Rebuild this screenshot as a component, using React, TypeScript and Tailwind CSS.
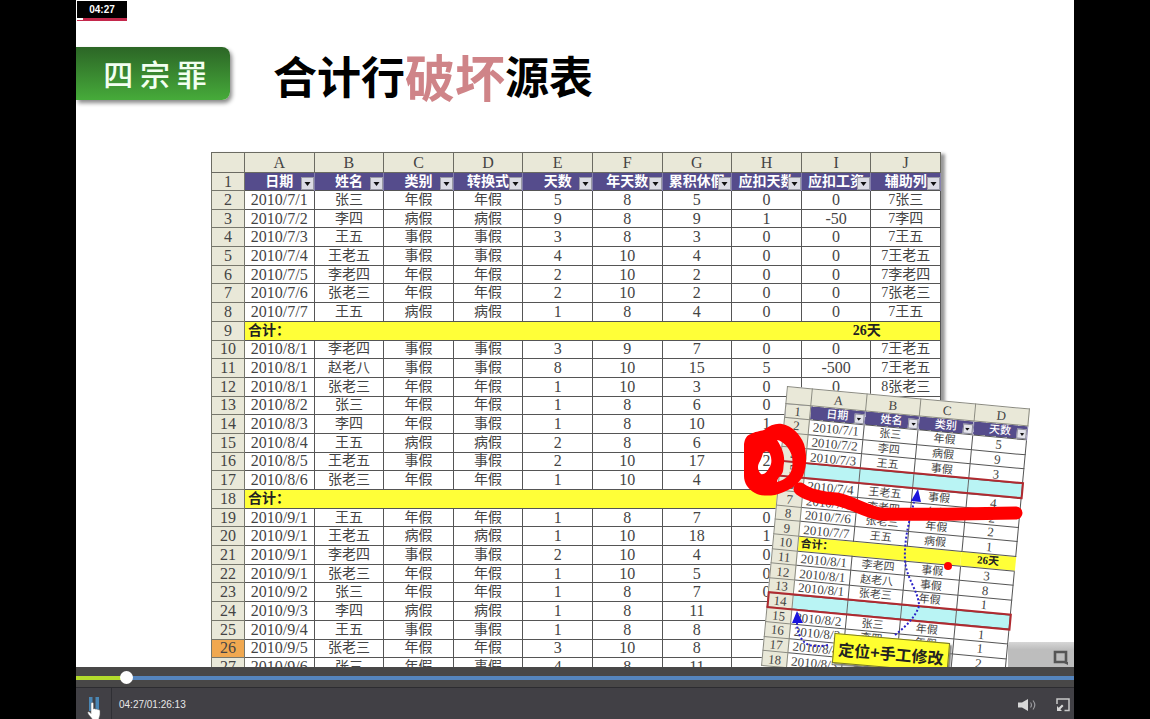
import React from "react";

type Row = string[];

const columns = ["A", "B", "C", "D", "E", "F", "G", "H", "I", "J"];

const headings = ["日期", "姓名", "类别", "转换式", "天数", "年天数", "累积休假", "应扣天数", "应扣工资", "辅助列"];

const records: Row[] = [
  ["2010/7/1", "张三", "年假", "年假", "5", "8", "5", "0", "0", "7张三"],
  ["2010/7/2", "李四", "病假", "病假", "9", "8", "9", "1", "-50", "7李四"],
  ["2010/7/3", "王五", "事假", "事假", "3", "8", "3", "0", "0", "7王五"],
  ["2010/7/4", "王老五", "事假", "事假", "4", "10", "4", "0", "0", "7王老五"],
  ["2010/7/5", "李老四", "年假", "年假", "2", "10", "2", "0", "0", "7李老四"],
  ["2010/7/6", "张老三", "年假", "年假", "2", "10", "2", "0", "0", "7张老三"],
  ["2010/7/7", "王五", "病假", "病假", "1", "8", "4", "0", "0", "7王五"],
  ["合计：", "26天"],
  ["2010/8/1", "李老四", "事假", "事假", "3", "9", "7", "0", "0", "7王老五"],
  ["2010/8/1", "赵老八", "事假", "事假", "8", "10", "15", "5", "-500", "7王老五"],
  ["2010/8/1", "张老三", "年假", "年假", "1", "10", "3", "0", "0", "8张老三"],
  ["2010/8/2", "张三", "年假", "年假", "1", "8", "6", "0", "", ""],
  ["2010/8/3", "李四", "年假", "事假", "1", "8", "10", "1", "", ""],
  ["2010/8/4", "王五", "病假", "病假", "2", "8", "6", "", "", ""],
  ["2010/8/5", "王老五", "事假", "事假", "2", "10", "17", "2", "", ""],
  ["2010/8/6", "张老三", "年假", "年假", "1", "10", "4", "", "", ""],
  ["合计：", ""],
  ["2010/9/1", "王五", "年假", "年假", "1", "8", "7", "0", "", ""],
  ["2010/9/1", "王老五", "病假", "病假", "1", "10", "18", "1", "", ""],
  ["2010/9/1", "李老四", "事假", "事假", "2", "10", "4", "0", "", ""],
  ["2010/9/1", "张老三", "年假", "年假", "1", "10", "5", "0", "", ""],
  ["2010/9/2", "张三", "年假", "年假", "1", "8", "7", "0", "", ""],
  ["2010/9/3", "李四", "病假", "病假", "1", "8", "11", "", "", ""],
  ["2010/9/4", "王五", "事假", "事假", "1", "8", "8", "", "", ""],
  ["2010/9/5", "张老三", "年假", "年假", "3", "10", "8", "", "", ""],
  ["2010/9/6", "张三", "年假", "事假", "4", "8", "11", "", "", ""],
];

const insetHeadings = ["日期", "姓名", "类别", "天数"];

const insetRecords: Row[] = [
  ["2010/7/1", "张三", "年假", "5"],
  ["2010/7/2", "李四", "病假", "9"],
  ["2010/7/3", "王五", "事假", "3"],
  [],
  ["2010/7/4", "王老五", "事假", "4"],
  ["2010/7/5", "李老四", "年假", "2"],
  ["2010/7/6", "张老三", "年假", "2"],
  ["2010/7/7", "王五", "病假", "1"],
  ["合计：", "26天"],
  ["2010/8/1", "李老四", "事假", "3"],
  ["2010/8/1", "赵老八", "事假", "8"],
  ["2010/8/1", "张老三", "年假", "1"],
  [],
  ["2010/8/2", "张三", "年假", "1"],
  ["2010/8/3", "李四", "年假", "1"],
  ["2010/8/4", "王五", "病假", "2"],
  ["2010/8/5", "王老五", "事假", "2"],
];

const isNumeric = (text: string) => /^[\d/-]+$/.test(text);

function FilterButton({ label, small }: { label: string; small?: boolean }) {
  return (
    <button
      type="button"
      aria-label={`筛选 ${label}`}
      className={
        small
          ? "absolute right-0 bottom-0 flex h-[10px] w-[10px] items-center justify-center border border-[#8b8b98] bg-[#e4e4ec]"
          : "absolute right-0 bottom-0 flex h-[13px] w-[13px] items-center justify-center border border-[#9a9aa6] bg-[#dcdce4]"
      }
    >
      <svg viewBox="0 0 6 4" className={small ? "h-[3px] w-[5px]" : "h-[4px] w-[7px]"} aria-hidden="true">
        <path d="M0 0h6L3 4z" fill="#111" />
      </svg>
    </button>
  );
}

function MainSheet() {
  return (
    <table className="h-[525px] w-full table-fixed border-collapse bg-white text-center font-['Liberation_Serif','Noto_Sans_CJK_SC',serif] text-[14px] leading-[14px] text-[#444] shadow-[4px_2px_3px_#999]">
      <colgroup>
        <col className="w-[33px]" />
        {columns.map((c) => (
          <col key={c} />
        ))}
      </colgroup>
      <thead>
        <tr className="h-[20px] bg-[#e9e8d8] text-[16px]">
          <th className="border border-[#6b6b62] p-0" />
          {columns.map((c) => (
            <th key={c} scope="col" className="border border-[#6b6b62] p-0 font-normal">
              {c}
            </th>
          ))}
        </tr>
        <tr className="h-[18px] bg-[#554c8c] text-white">
          <th className="border border-[#77776c] bg-[#e9e8d8] p-0 text-[16px] font-normal text-[#444]">1</th>
          {headings.map((h) => (
            <th key={h} scope="col" className="relative overflow-hidden border-x border-[#8580ac] p-0 font-bold whitespace-nowrap">
              <span className="flex justify-center">{h}</span>
              <FilterButton label={h} />
            </th>
          ))}
        </tr>
      </thead>
      <tbody>
        {records.map((row, i) => (
          <tr key={i} className="h-[18px]">
            <th
              scope="row"
              className={
                i + 2 === 26
                  ? "border border-[#77776c] bg-[#f0a850] p-0 text-[16px] font-normal"
                  : "border border-[#77776c] bg-[#e9e8d8] p-0 text-[16px] font-normal"
              }
            >
              {i + 2}
            </th>
            {row.length === 2 ? (
              <>
                <td colSpan={8} className="border-y border-[#555] bg-[#ffff38] p-0 pl-[3px] text-left font-bold text-[#222]">
                  {row[0]}
                </td>
                <td colSpan={2} className="border-y border-r border-[#555] bg-[#ffff38] p-0 pr-[8px] font-bold text-[#222]">
                  {row[1]}
                </td>
              </>
            ) : (
              row.map((cell, j) => (
                <td
                  key={j}
                  className={isNumeric(cell) ? "border border-[#555] p-0 text-[16px]" : "border border-[#555] p-0 whitespace-nowrap"}
                >
                  {cell}
                </td>
              ))
            )}
          </tr>
        ))}
      </tbody>
    </table>
  );
}

function InsetSheet() {
  return (
    <table className="h-[281px] w-[244px] table-fixed border-collapse bg-white text-center font-['Liberation_Serif','Noto_Sans_CJK_SC',serif] text-[11px] leading-[11px] text-[#444]">
      <colgroup>
        <col className="w-[25px]" />
        {insetHeadings.map((h) => (
          <col key={h} />
        ))}
      </colgroup>
      <thead>
        <tr className="h-[17px] bg-[#e9e8d8] text-[13px]">
          <th className="border border-[#8b8b80] p-0" />
          {columns.slice(0, 4).map((c) => (
            <th key={c} scope="col" className="border border-[#8b8b80] p-0 font-normal">
              {c}
            </th>
          ))}
        </tr>
        <tr className="h-[14px] bg-[#554c8c] text-white">
          <th className="border border-[#8b8b80] bg-[#e9e8d8] p-0 text-[13px] font-normal text-[#444]">1</th>
          {insetHeadings.map((h) => (
            <th key={h} scope="col" className="relative border-x border-[#8580ac] p-0 font-medium">
              {h}
              <FilterButton label={h} small />
            </th>
          ))}
        </tr>
      </thead>
      <tbody>
        {insetRecords.map((row, i) => (
          <tr key={i} className={row.length === 0 ? "h-[14px] outline-2 -outline-offset-1 outline-[#b02a30]" : "h-[14px]"}>
            <th scope="row" className="border border-[#8b8b80] bg-[#e9e8d8] p-0 text-[13px] font-normal">
              {i + 2}
            </th>
            {row.length === 0 &&
              insetHeadings.map((h) => <td key={h} className="border border-[#666] bg-[#b9f4f4] p-0" />)}
            {row.length === 2 && (
              <>
                <td colSpan={3} className="border-y border-[#555] bg-[#ffff38] p-0 pl-[2px] text-left font-bold text-[#222]">
                  {row[0]}
                </td>
                <td className="border-y border-[#555] bg-[#ffff38] p-0 font-bold text-[#222]">{row[1]}</td>
              </>
            )}
            {row.length === 4 &&
              row.map((cell, j) => (
                <td key={j} className={isNumeric(cell) ? "border border-[#555] p-0 text-[13px]" : "border border-[#555] p-0"}>
                  {cell}
                </td>
              ))}
          </tr>
        ))}
      </tbody>
    </table>
  );
}

function Annotations() {
  return (
    <svg viewBox="740 380 300 290" className="absolute top-[228px] left-[529px] h-[290px] w-[300px]" fill="none" aria-hidden="true">
      <g stroke="#2a22c8" strokeWidth="2" strokeDasharray="2 2">
        <path d="M895 635C905 627 915 618 919 606C919 592 906 578 905 560C904 540 909 522 914 502" />
        <path d="M828 645C812 648 804 645 800 636C798 632 797 628 797 622" />
      </g>
      <path d="M918 489l-7 12 10 1z" fill="#1a14dd" />
      <path d="M797 611l-5 12 11 0z" fill="#1a14dd" />
      <path
        fill="#ff0000"
        fillRule="evenodd"
        d="M751 434C754 432 760 431 764 430C770 425 776 423 782 424C792 426 800 434 804 444C807 454 807 466 803 476C797 487 786 492 775 495C768 496 760 496 755 493C748 489 744 483 744 476L744 444C745 438 747 435 751 434ZM763 453C766 451 769 451 770 454C772 459 772 464 769 468C767 472 764 475 761 474C758 471 757 467 759 463C761 460 762 456 763 453ZM777 440C783 441 789 447 792 456C793 464 793 471 788 476C785 479 781 481 777 482C777 479 779 477 781 475C784 472 783 468 784 463C785 455 782 448 777 440Z"
      />
      <path stroke="#ff0000" strokeWidth="13" strokeLinecap="round" strokeLinejoin="round" d="M800 489C808 495 820 498 836 499C852 502 864 511 880 514C920 515 970 514 1016 513" />
      <circle cx="948" cy="566" r="4" fill="#ff0000" />
    </svg>
  );
}

function Slide() {
  return (
    <main className="relative min-h-0 flex-1 overflow-hidden bg-white">
      <div className="absolute top-[1px] left-[1px] h-[20px] w-[50px] border-b-[3px] border-[#c4284c] bg-black text-center font-['Liberation_Sans',sans-serif] text-[10px] leading-[17px] font-bold text-white">
        04:27
        <span className="absolute -bottom-[2px] left-0 h-[2px] w-[6px] bg-white" />
      </div>
      <header className="flex items-center pt-[47px]">
        <div className="flex h-[53px] w-[154px] items-center justify-center rounded-r-lg bg-linear-to-b from-[#2c6626] to-[#46ab3a] pl-1 font-['Noto_Sans_CJK_SC',sans-serif] text-[30px] font-medium text-[#f2fff0] shadow-[2px_3px_4px_#888]">
          四 宗 罪
        </div>
        <h1 className="flex items-center pt-1 pl-[43px] text-[44px] leading-[49px] font-bold text-black">
          <span>合计行</span>
          <span className="text-[50px] text-[#cf8488]">破坏</span>
          <span>源表</span>
        </h1>
      </header>
      <div className="relative mt-[52px] ml-[135px] w-[730px]">
        <MainSheet />
        <div className="absolute top-[234px] left-[576px] origin-top-left rotate-[5.3deg]">
          <InsetSheet />
        </div>
        <Annotations />
        <div className="absolute top-[486px] left-[622px] flex h-[30px] w-[116px] rotate-[5deg] items-center justify-center border border-[#77772a] bg-[#ffff30] text-[16px] leading-[20px] font-bold whitespace-nowrap text-[#222] shadow-[2px_2px_2px_#777]">
          定位+手工修改
        </div>
      </div>
      <button
        type="button"
        aria-label="窗口"
        className="absolute right-0 bottom-0 flex h-[25px] w-[66px] items-center justify-end bg-linear-to-b from-[#d6d6d6] to-[#bdbdbd] to-30% pt-[6px] pr-[6px]"
      >
        <svg viewBox="0 0 15 15" className="h-[15px] w-[15px]" fill="none" aria-hidden="true">
          <path d="M2 2h11v10H2z" stroke="#555" strokeWidth="2.6" />
          <path d="M9 12h6v3z" fill="#555" />
        </svg>
      </button>
    </main>
  );
}

function PlayerBar() {
  return (
    <footer className="shrink-0 bg-[#414045]">
      <div className="flex h-[21px] items-center border-b border-[#2c2c30] bg-[#484747] pt-px">
        <input
          type="range"
          aria-label="播放进度"
          min={0}
          max={1000}
          defaultValue={45}
          className="h-[13px] w-full cursor-pointer appearance-none bg-[linear-gradient(to_right,#b4dc2c_51px,#5585bd_51px)] bg-[length:100%_4px] bg-center bg-no-repeat [&::-webkit-slider-thumb]:h-[13px] [&::-webkit-slider-thumb]:w-[13px] [&::-webkit-slider-thumb]:appearance-none [&::-webkit-slider-thumb]:rounded-full [&::-webkit-slider-thumb]:bg-white"
        />
      </div>
      <div className="flex h-[31px] items-center">
        <button type="button" aria-label="暂停" className="relative flex h-full w-[36px] justify-center border-r border-[#2f2f34] pt-[9px]">
          <svg viewBox="0 0 10 14" className="h-[14px] w-[10px]" aria-hidden="true">
            <path d="M0 0h3.500v14H0zM6.500 0H10v14H6.500z" fill="#4a86b4" />
          </svg>
          <svg viewBox="0 0 14 18" className="absolute top-[14px] left-[11px] h-[18px] w-[14px]" aria-hidden="true">
            <path d="M4 1.500c0-1.500 2.500-1.500 2.500 0V7c1-.6 2-.4 2.300.3 1-.5 1.900-.2 2.100.5 1-.4 2.100.1 2.100 1.200V12c0 2-1 3-1.300 6H5.500C5 15.500 1.500 13.500.8 11c-.4-1.300 1.200-1.700 2-.7L4 11.500z" fill="#fff" stroke="#666" strokeWidth=".5" />
          </svg>
        </button>
        <span className="pt-[3px] pl-[7px] font-['Liberation_Sans',sans-serif] text-[10px] leading-4 text-[#e8e8e8]">04:27/01:26:13</span>
        <div className="ml-auto flex items-center gap-5 pt-[2px] pr-[4px]">
          <button type="button" aria-label="音量">
            <svg viewBox="0 0 18 14" className="h-[14px] w-[18px]" fill="none" aria-hidden="true">
              <path d="M0 4.500h4L10 1v12L4 9.500H0z" fill="#d8d8d8" />
              <path d="M12.500 4.500q2 2.500 0 5M15 2.500q3.600 4.500 0 9" stroke="#9a9a9e" strokeWidth="1.200" />
            </svg>
          </button>
          <button type="button" aria-label="全屏">
            <svg viewBox="0 0 14 14" className="h-[14px] w-[14px]" fill="none" aria-hidden="true">
              <path d="M1 6V1h12v11.500H8.500" stroke="#c8c8c8" strokeWidth="1.500" />
              <path d="M1 13V8l1.700 1.700L6 6.500 7.500 8l-3.200 3.300L6 13z" fill="#d8d8d8" />
            </svg>
          </button>
        </div>
      </div>
    </footer>
  );
}

export default function App() {
  return (
    <div className="flex h-screen flex-col bg-black px-[76px] font-['Noto_Sans_CJK_SC',sans-serif]">
      <Slide />
      <PlayerBar />
    </div>
  );
}
